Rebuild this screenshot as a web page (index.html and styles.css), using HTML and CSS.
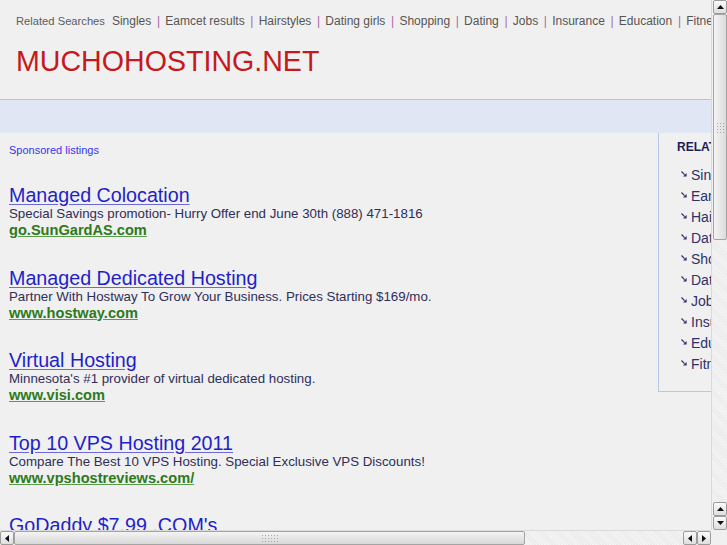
FILE: index.html
```html
<!DOCTYPE html>
<html>
<head>
<meta charset="utf-8">
<title>muchohosting.net</title>
<link rel="stylesheet" href="styles.css">
</head>
<body>
<div class="page">
  <div class="top">
    <div class="searches">
      <span class="rs-label">Related Searches</span>
      <a class="rs">Singles</a><span class="sep">|</span>
      <a class="rs">Eamcet results</a><span class="sep">|</span>
      <a class="rs">Hairstyles</a><span class="sep">|</span>
      <a class="rs">Dating girls</a><span class="sep">|</span>
      <a class="rs">Shopping</a><span class="sep">|</span>
      <a class="rs">Dating</a><span class="sep">|</span>
      <a class="rs">Jobs</a><span class="sep">|</span>
      <a class="rs">Insurance</a><span class="sep">|</span>
      <a class="rs">Education</a><span class="sep">|</span>
      <a class="rs">Fitness</a>
    </div>
    <div class="title">MUCHOHOSTING.NET</div>
  </div>
  <div class="band"></div>
  <div class="main">
    <div class="ads">
      <div class="sponsored">Sponsored listings</div>
      <div class="ad">
        <a class="ad-title">Managed Colocation</a>
        <div class="ad-desc">Special Savings promotion- Hurry Offer end June 30th (888) 471-1816</div>
        <a class="ad-url">go.SunGardAS.com</a>
      </div>
      <div class="ad">
        <a class="ad-title">Managed Dedicated Hosting</a>
        <div class="ad-desc">Partner With Hostway To Grow Your Business. Prices Starting $169/mo.</div>
        <a class="ad-url">www.hostway.com</a>
      </div>
      <div class="ad">
        <a class="ad-title">Virtual Hosting</a>
        <div class="ad-desc">Minnesota's #1 provider of virtual dedicated hosting.</div>
        <a class="ad-url">www.visi.com</a>
      </div>
      <div class="ad">
        <a class="ad-title">Top 10 VPS Hosting 2011</a>
        <div class="ad-desc">Compare The Best 10 VPS Hosting. Special Exclusive VPS Discounts!</div>
        <a class="ad-url">www.vpshostreviews.com/</a>
      </div>
      <div class="ad">
        <a class="ad-title">GoDaddy $7.99 .COM's</a>
        <div class="ad-desc">Register your domain name today at GoDaddy.</div>
        <a class="ad-url">www.GoDaddy.com</a>
      </div>
    </div>
    <div class="side">
      <div class="side-head">RELATED SEARCHES</div>
      <ul class="side-list">
        <li><svg class="arr" viewBox="0 0 6 6" width="6" height="6"><path d="M0.5 0.5 L3.6 3.6" stroke="#2d3168" stroke-width="1.2"/><polygon points="5.6,2 5.6,5.6 2,5.6" fill="#2d3168"/></svg><a>Singles</a></li>
        <li><svg class="arr" viewBox="0 0 6 6" width="6" height="6"><path d="M0.5 0.5 L3.6 3.6" stroke="#2d3168" stroke-width="1.2"/><polygon points="5.6,2 5.6,5.6 2,5.6" fill="#2d3168"/></svg><a>Eamcet results</a></li>
        <li><svg class="arr" viewBox="0 0 6 6" width="6" height="6"><path d="M0.5 0.5 L3.6 3.6" stroke="#2d3168" stroke-width="1.2"/><polygon points="5.6,2 5.6,5.6 2,5.6" fill="#2d3168"/></svg><a>Hairstyles</a></li>
        <li><svg class="arr" viewBox="0 0 6 6" width="6" height="6"><path d="M0.5 0.5 L3.6 3.6" stroke="#2d3168" stroke-width="1.2"/><polygon points="5.6,2 5.6,5.6 2,5.6" fill="#2d3168"/></svg><a>Dating girls</a></li>
        <li><svg class="arr" viewBox="0 0 6 6" width="6" height="6"><path d="M0.5 0.5 L3.6 3.6" stroke="#2d3168" stroke-width="1.2"/><polygon points="5.6,2 5.6,5.6 2,5.6" fill="#2d3168"/></svg><a>Shopping</a></li>
        <li><svg class="arr" viewBox="0 0 6 6" width="6" height="6"><path d="M0.5 0.5 L3.6 3.6" stroke="#2d3168" stroke-width="1.2"/><polygon points="5.6,2 5.6,5.6 2,5.6" fill="#2d3168"/></svg><a>Dating</a></li>
        <li><svg class="arr" viewBox="0 0 6 6" width="6" height="6"><path d="M0.5 0.5 L3.6 3.6" stroke="#2d3168" stroke-width="1.2"/><polygon points="5.6,2 5.6,5.6 2,5.6" fill="#2d3168"/></svg><a>Jobs</a></li>
        <li><svg class="arr" viewBox="0 0 6 6" width="6" height="6"><path d="M0.5 0.5 L3.6 3.6" stroke="#2d3168" stroke-width="1.2"/><polygon points="5.6,2 5.6,5.6 2,5.6" fill="#2d3168"/></svg><a>Insurance</a></li>
        <li><svg class="arr" viewBox="0 0 6 6" width="6" height="6"><path d="M0.5 0.5 L3.6 3.6" stroke="#2d3168" stroke-width="1.2"/><polygon points="5.6,2 5.6,5.6 2,5.6" fill="#2d3168"/></svg><a>Education</a></li>
        <li><svg class="arr" viewBox="0 0 6 6" width="6" height="6"><path d="M0.5 0.5 L3.6 3.6" stroke="#2d3168" stroke-width="1.2"/><polygon points="5.6,2 5.6,5.6 2,5.6" fill="#2d3168"/></svg><a>Fitness</a></li>
      </ul>
    </div>
  </div>
</div>

<div class="vscroll">
  <div class="sbtn"><svg viewBox="0 0 7 4" width="7" height="4"><polygon points="3.5,0 7,4 0,4" fill="#111"/></svg></div>
  <div class="vthumb"><div class="grip"></div></div>
  <div class="vtrough"></div>
  <div class="sbtn"><svg viewBox="0 0 7 4" width="7" height="4"><polygon points="3.5,0 7,4 0,4" fill="#111"/></svg></div>
  <div class="sbtn"><svg viewBox="0 0 7 4" width="7" height="4"><polygon points="0,0 7,0 3.5,4" fill="#111"/></svg></div>
</div>
<div class="hscroll">
  <div class="sbtn"><svg viewBox="0 0 4 7" width="4" height="7"><polygon points="0,3.5 4,0 4,7" fill="#111"/></svg></div>
  <div class="hthumb"><div class="grip"></div></div>
  <div class="htrough"></div>
  <div class="sbtn"><svg viewBox="0 0 4 7" width="4" height="7"><polygon points="0,3.5 4,0 4,7" fill="#111"/></svg></div>
  <div class="sbtn"><svg viewBox="0 0 4 7" width="4" height="7"><polygon points="0,0 4,3.5 0,7" fill="#111"/></svg></div>
</div>
<div class="corner"></div>
</body>
</html>
```

FILE: styles.css
```css
html, body {
  margin: 0;
  padding: 0;
  overflow: hidden;
  background: #f0f0f0;
  font-family: "Liberation Sans", Arial, sans-serif;
}

a { text-decoration: none; cursor: pointer; }

.page {
  width: 1000px;
}

.top {
  height: 99px;
  box-sizing: border-box;
  padding: 13px 0 0 16px;
}

.searches {
  display: flex;
  align-items: baseline;
  height: 16px;
  line-height: 16px;
  white-space: nowrap;
}

.rs-label {
  font-size: 11.2px;
  color: #5c5c5c;
  margin-right: 7px;
}

.rs {
  font-size: 12px;
  color: #555;
}

.sep {
  font-size: 12px;
  color: #a56aa8;
  margin: 0 5.2px 0 5.7px;
}

.title {
  margin-top: 16px;
  font-size: 28.6px;
  line-height: 32px;
  color: #c41a1c;
  white-space: nowrap;
}

.band {
  height: 33px;
  border-top: 1px solid #b3c5e6;
  background: #e0e6f4;
}

.main {
  display: flex;
  align-items: flex-start;
}

.ads {
  width: 649px;
  padding: 10px 0 0 9px;
}

.sponsored {
  font-size: 11px;
  line-height: 14px;
  color: #3636ee;
  margin-bottom: 28px;
}

.ad {
  display: flex;
  flex-direction: column;
  align-items: flex-start;
  margin-bottom: 28.5px;
  white-space: nowrap;
}

.ad-title {
  font-size: 19.7px;
  line-height: 21px;
  color: #1f1fc8;
  text-decoration: underline;
  text-decoration-color: #6a6ad8;
  text-underline-offset: 2px;
}

.ad-desc {
  font-size: 13.3px;
  line-height: 15px;
  color: #2e2e58;
}

.ad-url {
  font-size: 14.6px;
  line-height: 18px;
  font-weight: bold;
  color: #2c7a1c;
  text-decoration: underline;
  text-decoration-color: #5a9a4a;
}

.side {
  width: 240px;
  height: 259px;
  box-sizing: border-box;
  border-left: 1px solid #b6c7e8;
  border-bottom: 1px solid #b6c7e8;
  padding: 7px 0 0 18px;
  white-space: nowrap;
}

.side-head {
  font-size: 12px;
  line-height: 14px;
  font-weight: bold;
  color: #1b1d55;
}

.side-list {
  list-style: none;
  margin: 10.5px 0 0 0;
  padding: 0;
}

.side-list li {
  display: flex;
  align-items: center;
  height: 21px;
  padding-left: 4px;
}

.arr {
  margin-right: 4px;
  margin-top: -3px;
}

.side-list a {
  font-size: 14px;
  color: #2d3168;
}

/* fake window scrollbars */
.vscroll {
  position: fixed;
  top: 0;
  right: 0;
  width: 16px;
  height: 530px;
  display: flex;
  flex-direction: column;
  background: #f2f2f2;
  border-left: 1px solid #dadada;
  box-sizing: border-box;
}

.hscroll {
  position: fixed;
  left: 0;
  bottom: 0;
  width: 711px;
  height: 15px;
  display: flex;
  background: #f2f2f2;
  border-top: 1px solid #dadada;
  box-sizing: border-box;
}

.corner {
  position: fixed;
  right: 0;
  bottom: 0;
  width: 16px;
  height: 15px;
  background: #f0f0f0;
}

.sbtn {
  flex: none;
  width: 14px;
  height: 14px;
  box-sizing: border-box;
  border: 1px solid #9c9c9c;
  border-radius: 2px;
  background: linear-gradient(#fbfbfb, #dedede);
  display: flex;
  align-items: center;
  justify-content: center;
}

.vscroll .sbtn { margin-left: 1px; }

.vthumb {
  flex: none;
  height: 226px;
  width: 14px;
  margin-left: 1px;
  box-sizing: border-box;
  border: 1px solid #a4a4a4;
  border-radius: 2px;
  background: linear-gradient(90deg, #f4f4f4, #dcdcdc);
  display: flex;
  align-items: center;
  justify-content: center;
}

.vtrough {
  flex: 1;
  background: repeating-linear-gradient(45deg, #f4f4f4 0 1px, #ebebeb 1px 2px);
}

.hthumb {
  flex: none;
  width: 511px;
  height: 14px;
  box-sizing: border-box;
  border: 1px solid #a4a4a4;
  border-radius: 2px;
  background: linear-gradient(#f4f4f4, #d8d8d8);
  display: flex;
  align-items: center;
  justify-content: center;
}

.htrough {
  flex: 1;
  background: repeating-linear-gradient(45deg, #f4f4f4 0 1px, #ebebeb 1px 2px);
}

.grip {
  width: 9px;
  height: 11px;
  background-image: radial-gradient(circle, #a8a8a8 0.7px, transparent 1px);
  background-size: 3px 3px;
}

.hthumb .grip {
  width: 17px;
  height: 9px;
}
```
